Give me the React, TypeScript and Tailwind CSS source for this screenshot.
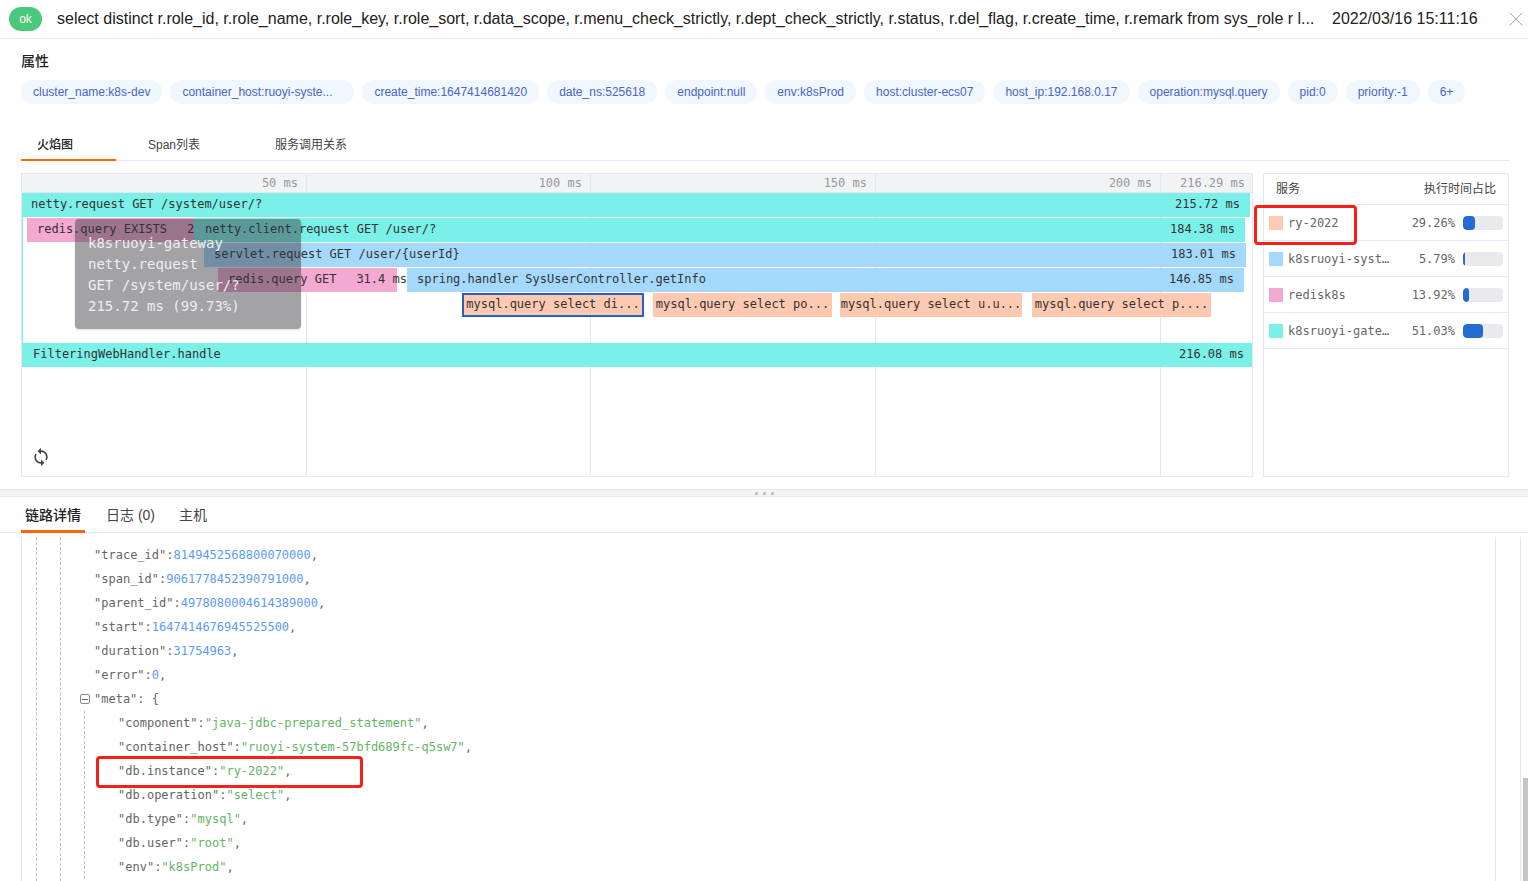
import React from 'react';
import { MdSync } from 'react-icons/md';
import { X } from 'lucide-react';

const tags = [
  { text: 'cluster_name:k8s-dev', cls: '' },
  { text: 'container_host:ruoyi-syste...', cls: 'w-[184px]' },
  { text: 'create_time:1647414681420', cls: '' },
  { text: 'date_ns:525618', cls: '' },
  { text: 'endpoint:null', cls: '' },
  { text: 'env:k8sProd', cls: '' },
  { text: 'host:cluster-ecs07', cls: '' },
  { text: 'host_ip:192.168.0.17', cls: '' },
  { text: 'operation:mysql.query', cls: '' },
  { text: 'pid:0', cls: '' },
  { text: 'priority:-1', cls: '' },
  { text: '6+', cls: '' },
];

const ticks = [
  { label: '50 ms', cls: 'w-[285px] border-r pr-2' },
  { label: '100 ms', cls: 'w-[284px] border-r pr-2' },
  { label: '150 ms', cls: 'w-[285px] border-r pr-2' },
  { label: '200 ms', cls: 'w-[285px] border-r pr-2' },
  { label: '216.29 ms', cls: 'flex-1 pr-[7px]' },
];

const bars = [
  { label: 'netty.request GET /system/user/?', time: '215.72 ms', cls: 'left-0 top-[19px] w-[1228px] bg-[#7af0e8] pl-[9px]' },
  { label: 'redis.query EXISTS', time: '29.3 ms', cls: 'left-[5px] top-[44px] w-[167px] bg-[#f3a9d2] pl-[10px]' },
  { label: 'netty.client.request GET /user/?', time: '184.38 ms', cls: 'left-[172px] top-[44px] w-[1051px] bg-[#7af0e8] pl-[11px]' },
  { label: 'servlet.request GET /user/{userId}', time: '183.01 ms', cls: 'left-[182px] top-[69px] w-[1042px] bg-[#a5d9fb] pl-[10px]' },
  { label: 'redis.query GET', time: '31.4 ms', cls: 'left-[196px] top-[94px] w-[179px] bg-[#f3a9d2] pl-[10px]' },
  { label: 'spring.handler SysUserController.getInfo', time: '146.85 ms', cls: 'left-[385px] top-[94px] w-[837px] bg-[#a5d9fb] pl-[10px]' },
  { label: 'FilteringWebHandler.handle', time: '216.08 ms', cls: 'left-0 top-[169px] w-[1232px] bg-[#7af0e8] pl-[11px]' },
];

const queries = [
  { label: 'mysql.query select di...', cls: 'left-[440px] w-[182px] border-2 border-[#2a5fc9] pb-[2px]' },
  { label: 'mysql.query select po...', cls: 'left-[631px] w-[179px] pb-[2px]' },
  { label: 'mysql.query select u.u...', cls: 'left-[818px] w-[182px] pb-[2px]' },
  { label: 'mysql.query select p....', cls: 'left-[1010px] w-[179px] pb-[2px]' },
];

const services = [
  { name: 'ry-2022', pct: '29.26%', swatch: 'bg-[#fdcbb3]', fill: 'w-[12px]' },
  { name: 'k8sruoyi-system', pct: '5.79%', swatch: 'bg-[#a5d9fb]', fill: 'w-[2px]' },
  { name: 'redisk8s', pct: '13.92%', swatch: 'bg-[#f3a9d2]', fill: 'w-[6px]' },
  { name: 'k8sruoyi-gateway', pct: '51.03%', swatch: 'bg-[#7af0e8]', fill: 'w-[20px]' },
];

const jsonLines = [
  { key: 'trace_id', value: '8149452568800070000' },
  { key: 'span_id', value: '9061778452390791000' },
  { key: 'parent_id', value: '4978080004614389000' },
  { key: 'start', value: '1647414676945525500' },
  { key: 'duration', value: '31754963' },
  { key: 'error', value: '0' },
];

const metaLines = [
  { key: 'component', value: 'java-jdbc-prepared_statement' },
  { key: 'container_host', value: 'ruoyi-system-57bfd689fc-q5sw7' },
  { key: 'db.instance', value: 'ry-2022' },
  { key: 'db.operation', value: 'select' },
  { key: 'db.type', value: 'mysql' },
  { key: 'db.user', value: 'root' },
  { key: 'env', value: 'k8sProd' },
];

const sans = "font-['Liberation_Sans','Noto_Sans_CJK_SC',sans-serif]";
const mono = "font-['DejaVu_Sans_Mono','Liberation_Mono',monospace]";

export default function App() {
  return (
    <div className={`relative flex h-[881px] w-[1528px] flex-col overflow-hidden bg-white text-[#333] ${sans}`}>
      {/* title bar */}
      <header className="flex h-[39px] shrink-0 items-center border-b border-[#e5e6ee] pl-[9px]">
        <span className="flex h-6 w-[33px] items-center justify-center rounded-full bg-[#4cc87c] text-xs text-white">ok</span>
        <h1 className="ml-[15px] w-[1260px] whitespace-nowrap text-base text-[#222]">
          select distinct r.role_id, r.role_name, r.role_key, r.role_sort, r.data_scope, r.menu_check_strictly, r.dept_check_strictly, r.status, r.del_flag, r.create_time, r.remark from sys_role r l...
        </h1>
        <span className="ml-[15px] whitespace-nowrap text-base text-[#222]">2022/03/16 15:11:16</span>
        <X className="ml-auto text-[#aaa]" size={24} strokeWidth={1} />
      </header>

      {/* attributes */}
      <section className="shrink-0 px-[21px] pt-[13px]">
        <h2 className="text-sm leading-[18px] font-medium text-[#222]">属性</h2>
        <div className="mt-[10px] flex gap-2">
          {tags.map((t) => (
            <span key={t.text} className={`flex h-6 items-center whitespace-nowrap rounded-full bg-[#f0f7ff] px-3 text-xs text-[#4a64c8] ${t.cls}`}>
              {t.text}
            </span>
          ))}
        </div>
      </section>

      {/* tabs */}
      <nav className="mx-[21px] mt-6 flex h-[33px] w-[1488px] shrink-0 border-b border-[#e5e6ee] text-xs text-[#444]">
        <div className="flex h-[33px] w-[95px] items-center border-b-2 border-[#ff6600] pl-4 pt-[3px] font-medium text-[#222]">火焰图</div>
        <div className="ml-8 flex h-[33px] items-center">Span列表</div>
        <div className="ml-[75px] flex h-[33px] items-center">服务调用关系</div>
      </nav>

      <div className="ml-[21px] mt-3 flex h-[304px] w-[1488px] shrink-0 gap-[10px]">
        {/* flame graph */}
        <div className={`relative h-full w-[1232px] overflow-hidden border border-[#e5e6ee] text-xs text-[#333] ${mono}`}>
          <div className="flex h-[19px] border-b border-[#e5e6ee] bg-[#f2f3f5] text-[#999]">
            {ticks.map((t) => (
              <div key={t.label} className={`flex items-center justify-end border-[#e5e6ee] ${t.cls}`}>
                {t.label}
              </div>
            ))}
          </div>
          <div className="absolute left-[284px] top-[19px] h-full w-px bg-[#e5e6ee]" />
          <div className="absolute left-[568px] top-[19px] h-full w-px bg-[#e5e6ee]" />
          <div className="absolute left-[853px] top-[19px] h-full w-px bg-[#e5e6ee]" />
          <div className="absolute left-[1138px] top-[19px] h-full w-px bg-[#e5e6ee]" />
          <div className="absolute left-0 top-[43px] h-[126px] w-px bg-[#7af0e8]" />

          {bars.map((b) => (
            <div key={b.label} className={`absolute flex h-6 items-center justify-between gap-5 whitespace-pre pb-[2px] pr-[10px] ${b.cls}`}>
              <span>{b.label}</span>
              <span>{b.time}</span>
            </div>
          ))}
          {queries.map((q) => (
            <div key={q.label} className={`absolute top-[119px] flex h-6 items-center justify-center whitespace-pre bg-[#fdc9b1] ${q.cls}`}>
              {q.label}
            </div>
          ))}

          {/* hover tooltip */}
          <div className="absolute left-[53px] top-[45px] h-[110px] w-[226px] rounded bg-[#32323c]/45 pl-[13px] pt-[14px] text-sm leading-[21px] text-[#eeeeee] shadow">
            <div>k8sruoyi-gateway</div>
            <div>netty.request</div>
            <div>GET /system/user/?</div>
            <div>215.72 ms (99.73%)</div>
          </div>

          <MdSync className="absolute bottom-[9px] left-[9px] text-[#444]" size={20} />
        </div>

        {/* services */}
        <aside className="h-full w-[246px] border border-[#e5e6ee]">
          <div className="flex h-[31px] items-center justify-between border-b border-[#e5e6ee] pl-3 pr-3 text-xs text-[#444]">
            <span>服务</span>
            <span>执行时间占比</span>
          </div>
          {services.map((s) => (
            <div key={s.name} className={`flex h-9 items-center border-b border-[#e5e6ee] pl-[5px] text-xs text-[#666] ${mono}`}>
              <span className={`h-[14px] w-[14px] shrink-0 ${s.swatch}`} />
              <span className="ml-[5px] w-[102px] truncate">{s.name}</span>
              <span className="w-[65px] text-right">{s.pct}</span>
              <span className="ml-2 h-[14px] w-10 overflow-hidden rounded-sm bg-[#e9e9ee]">
                <span className={`block h-full rounded-sm bg-[#256bd6] ${s.fill}`} />
              </span>
            </div>
          ))}
        </aside>
      </div>

      {/* split handle */}
      <div className="mt-3 flex h-2 shrink-0 items-center justify-center gap-[5px] border-y border-[#e5e6ee] bg-[#f2f3f5]">
        <span className="h-[3px] w-[3px] rounded-full bg-[#b8bac0]" />
        <span className="h-[3px] w-[3px] rounded-full bg-[#b8bac0]" />
        <span className="h-[3px] w-[3px] rounded-full bg-[#b8bac0]" />
      </div>

      {/* detail tabs */}
      <nav className="flex h-9 shrink-0 border-b border-[#e5e6ee] pl-[21px] text-sm text-[#444]">
        <div className="flex h-9 w-16 items-center justify-center border-b-[3px] border-[#ff6600] pt-[3px] font-medium text-[#222]">链路详情</div>
        <div className="ml-[21px] flex h-[35px] items-center">日志 (0)</div>
        <div className="ml-6 flex h-[35px] items-center">主机</div>
      </nav>

      {/* json view */}
      <div className={`relative ml-[21px] mt-1 min-h-0 flex-1 border-l border-[#e5e6ee] pl-[72px] pt-[6px] text-xs leading-6 text-[#666] ${mono}`}>
        <div className="absolute bottom-0 left-[14px] top-0 border-l border-dashed border-[#bbb]" />
        <div className="absolute bottom-0 left-[38px] top-0 border-l border-dashed border-[#bbb]" />
        <div className="absolute bottom-0 left-[1473px] top-0 w-px bg-[#e5e6ee]" />
        <div className="absolute bottom-0 left-[1498px] top-0 w-px bg-[#e5e6ee]" />

        {jsonLines.map((l) => (
          <div key={l.key} className="whitespace-pre">
            "{l.key}":<span className="text-[#5b9cf2]">{l.value}</span>,
          </div>
        ))}
        <div className="relative whitespace-pre">
          <span className="absolute left-[-14px] top-[7px] flex h-[10px] w-[10px] items-center justify-center rounded-[2px] border border-[#888]">
            <span className="h-px w-[6px] bg-[#666]" />
          </span>
          "meta": {'{'}
        </div>
        <div className="relative pl-6">
          <div className="absolute bottom-0 left-[-10px] top-0 border-l border-dashed border-[#bbb]" />
          {metaLines.map((l) => (
            <div key={l.key} className="whitespace-pre">
              "{l.key}":<span className="text-[#63b567]">"{l.value}"</span>,
            </div>
          ))}
        </div>
        <div className="absolute bottom-0 left-[1501px] h-[103px] w-[5px] bg-[#c4c4c4]" />
      </div>

      {/* annotation boxes drawn over the screenshot */}
      <div className="absolute left-[1254px] top-[205px] h-[40px] w-[103px] rounded-sm border-[3px] border-[#f5201a]" />
      <div className="absolute left-[96px] top-[756px] h-[32px] w-[267px] rounded-sm border-[3px] border-[#f5201a]" />
    </div>
  );
}
